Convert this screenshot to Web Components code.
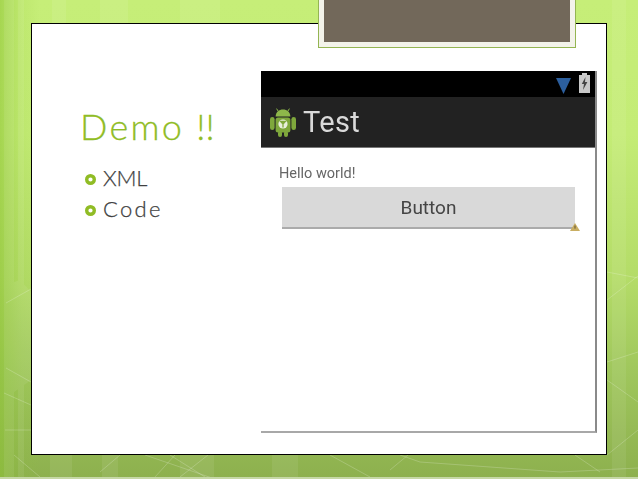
<!DOCTYPE html>
<html lang="en"><head><meta charset="utf-8"><title>Demo</title>
<style>html,body{margin:0;padding:0;background:#9cbc58}</style></head>
<body>
<x-stage>
  <x-slide>
    <x-tab slot="tab"></x-tab>
    <x-outline slot="left">
      <span slot="heading">Demo <span style="letter-spacing:.2px">!!</span></span>
      <x-bullet style="--ls:-.2px">XML</x-bullet>
      <x-bullet style="--ls:2.3px">Code</x-bullet>
    </x-outline>
    <x-phone slot="right" title-text="Test" hello="Hello world!" button="Button"></x-phone>
  </x-slide>
</x-stage>
<script>
function def(name, html, init){
  customElements.define(name, class extends HTMLElement{
    constructor(){super();this.attachShadow({mode:'open'}).innerHTML=html;}
    connectedCallback(){ if(init) init(this); }
  });
}
def('x-stage',`<style>
:host{display:block;position:relative;width:638px;height:479px;overflow:hidden;box-sizing:border-box;padding:23px 31px 0;
background:linear-gradient(90deg,rgba(140,195,50,.55) 0,rgba(140,195,50,.12) 22px,rgba(255,255,255,0) 40px),
linear-gradient(180deg,#c6ee78 0,#c4ec76 28%,#b4dc68 58%,#9fc65c 78%,#8db04e 100%);}
svg{position:absolute;inset:0;}
.wrap{position:relative}
.strip{position:absolute;left:0;right:0;bottom:0;height:2px;background:#c6d8a6}
</style>
<svg width="638" height="479" viewBox="0 0 638 479" fill="none">
 <g fill="#fff" opacity=".07">
  <rect x="4" y="0" width="10" height="479"/><rect x="18" y="0" width="6" height="479"/>
  <rect x="52" y="0" width="14" height="23"/><rect x="100" y="0" width="28" height="23"/><rect x="180" y="0" width="40" height="23"/>
  <rect x="50" y="455" width="22" height="24"/><rect x="102" y="455" width="16" height="24"/><rect x="180" y="455" width="34" height="24"/><rect x="272" y="455" width="26" height="24"/>
  <rect x="612" y="0" width="14" height="479"/>
  <path d="M6 285 L20 280 L31 292 V380 L14 392 L5 384Z"/>
 </g>
 <g stroke="#fff" stroke-opacity=".2" stroke-width="1">
  <path d="M6 303 L31 289M6 368 L31 382M4 393 L31 405M5 430 H31M14 455 L40 477"/>
  <path d="M120 455 L100 472M170 455 L205 477M145 455 L215 479M175 455 L155 477M208 455 L180 477"/>
  <path d="M330 455 L370 477M400 455 L420 462 L560 472 L638 468M408 455 L390 470M575 455 L600 472"/>
  <path d="M607 272 L638 278M607 300 L638 276M607 362 L638 352M607 380 L638 402M607 455 L638 430"/>
 </g>
</svg>
<div class="strip"></div>
<div class="wrap"><slot></slot></div>`);
def('x-slide',`<style>
:host{display:block;position:relative;width:576px;height:432px;box-sizing:border-box;background:#fff;border:1px solid #000;border-left-width:1.4px}
.row{display:flex;align-items:flex-start;height:100%}
.l{width:229px;flex:none}
.r{flex:none;padding-top:47px}
.tab{position:absolute;left:286px;top:-24px}
</style>
<div class="tab"><slot name="tab"></slot></div>
<div class="row"><div class="l"><slot name="left"></slot></div><div class="r"><slot name="right"></slot></div></div>`);
def('x-tab',`<style>
:host{display:block;width:258px;height:48px;box-sizing:border-box;border:1px solid #94b552;border-top:0;border-bottom-width:1.5px;background:#f3f3ea;padding:0 5px 5px}
div{height:100%;background:#72685a}
</style><div></div>`);
def('x-outline',`<style>
:host{display:block;padding:82px 0 0 48px;}
h1{margin:0 0 21px;font:300 36px/40px "Lato","Liberation Sans",sans-serif;letter-spacing:2.3px;color:#90bc25;white-space:nowrap;-webkit-text-stroke:.3px #90bc25}
.list{display:flex;flex-direction:column;gap:9px;}
</style><h1><slot name="heading"></slot></h1><div class="list"><slot></slot></div>`);
def('x-bullet',`<style>
:host{display:flex;align-items:center;gap:7px;font:300 22px/22px "Lato","Liberation Sans",sans-serif;letter-spacing:var(--ls,0);color:#404040;-webkit-text-stroke:.25px #404040}
svg{flex:none;margin-left:5px;position:relative;top:1px}
</style><svg width="11" height="11" viewBox="0 0 11 11"><circle cx="5.5" cy="5.5" r="3.8" fill="none" stroke="#90bc25" stroke-width="3.4"/></svg><slot></slot>`);
def('x-phone',`<style>
:host{display:block;width:336px;height:362px;box-sizing:border-box;border-right:2px solid #8a8a8a;border-bottom:2px solid #a8a8a8;background:#fff;font-family:Roboto,"Liberation Sans",sans-serif;border-left:0}
.status{height:26px;background:#000;display:flex;justify-content:flex-end;align-items:flex-start;gap:6px;padding:2px 4px 0 0;box-sizing:border-box}
.status svg{display:block;filter:blur(.6px)}
.bar{height:51px;background:#222;display:flex;align-items:center;gap:7px;padding-left:9px;box-sizing:border-box;border-bottom:1px solid #777}
.bar svg{filter:blur(.4px);flex:none}
.bar span{font-size:29px;line-height:34px;color:#d9d9d9;letter-spacing:.3px;filter:blur(.3px)}
.body{padding:17px 20px 0 18px;position:relative}
.hello{font-size:14.5px;line-height:18px;color:#666;filter:blur(.25px)}
.btn{position:relative;margin:4px 0 0 3px;height:42px;box-sizing:border-box;background:#d9d9d9;border-bottom:2px solid #ababab;display:flex;align-items:center;justify-content:center;font-size:19px;color:#454545;filter:blur(.2px)}
.warn{position:absolute;right:-5px;bottom:-4px}
</style>
<div class="status">
 <svg width="17" height="20" viewBox="0 0 17 20" style="margin-top:4px"><path d="M1 1H16L8.5 17Z" fill="#2c5f9e"/></svg>
 <svg width="13" height="20" viewBox="0 0 13 20"><path d="M4 0H9V2H12V20H1V2H4Z" fill="#c8c8c8"/><path d="M7.5 4L3.8 11H6L5 17L9.4 9H7Z" fill="#444"/></svg>
</div>
<div class="bar">
 <svg width="26" height="30" viewBox="0 0 26 30">
  <g fill="#7fa83c">
   <rect x="0" y="10" width="4.6" height="13" rx="2.3"/><rect x="21.4" y="10" width="4.6" height="13" rx="2.3"/>
   <rect x="8" y="24" width="4" height="6" rx="2"/><rect x="14" y="24" width="4" height="6" rx="2"/>
   <path d="M5.6 9.4C5.8 5 9 2.4 13 2.4S20.2 5 20.4 9.4Z" fill="#8eb84a"/>
   <rect x="5.6" y="10.4" width="14.8" height="15" rx="2.5"/>
  </g>
  <path d="M8 4L6.6 1.6M18 4L19.4 1.6" stroke="#8eb84a" stroke-width="1"/>
  <circle cx="13" cy="17" r="4.6" fill="#e8efdc"/>
  <path d="M13 17L10.6 14.4H15.4ZM13 17V20.6" stroke="#7fa83c" stroke-width="1.3" fill="#7fa83c"/>
 </svg>
 <span></span>
</div>
<div class="body">
 <div class="hello"></div>
 <div class="btn"><b style="font-weight:400"></b>
  <svg class="warn" width="10" height="8" viewBox="0 0 10 8"><path d="M5 0L10 8H0Z" fill="#c9ae62"/><path d="M5 2.5V5.6" stroke="#5e5030"/></svg>
 </div>
</div>`,
el=>{const s=el.shadowRoot;
 s.querySelector('.bar span').textContent=el.getAttribute('title-text');
 s.querySelector('.hello').textContent=el.getAttribute('hello');
 s.querySelector('.btn b').textContent=el.getAttribute('button');});
</script>
</body></html>
